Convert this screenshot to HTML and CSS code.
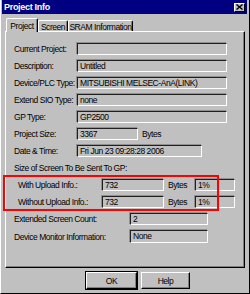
FILE: index.html
```html
<!DOCTYPE HTML>
<html>
<head>
<title>Project Info</title>
<link rel="stylesheet" href="styles.css">
</head>
<body>
  <div class="window">
    <!-- title bar -->
    <div class="titlebar">
      <span class="title">Project Info</span>
      <span class="close">
        <svg width="7" height="6" viewBox="0 0 7 6"><path d="M0.5 0.5 L6.5 5.5 M6.5 0.5 L0.5 5.5" stroke="#000" stroke-width="1.4"/></svg>
      </span>
    </div>
    <!-- tabs -->
    <div class="tabs">
      <div class="tab active">Project</div>
      <div class="tab t-screen">Screen</div>
      <div class="tab t-sram">SRAM Information</div>
    </div>
    <div class="panel">
      <div class="row"><span class="lbl">Current Project:</span><span class="field wide"></span></div>
      <div class="row"><span class="lbl">Description:</span><span class="field wide">Untitled</span></div>
      <div class="row"><span class="lbl">Device/PLC Type:</span><span class="field wide">MITSUBISHI MELSEC-AnA(LINK)</span></div>
      <div class="row"><span class="lbl">Extend SIO Type:</span><span class="field wide">none</span></div>
      <div class="row"><span class="lbl">GP Type:</span><span class="field wide">GP2500</span></div>
      <div class="row"><span class="lbl">Project Size:</span><span class="field size">3367</span><span class="unit">Bytes</span></div>
      <div class="row"><span class="lbl">Date &amp; Time:</span><span class="field date">Fri Jun 23 09:28:28 2006</span></div>
      <div class="row"><span class="lbl">Size of Screen To Be Sent To GP:</span></div>
      <div class="row sub"><span class="lbl">With Upload Info.:</span><span class="field upl">732</span><span class="unit u2">Bytes</span><span class="field pct">1%</span></div>
      <div class="row sub"><span class="lbl">Without Upload Info.:</span><span class="field upl">732</span><span class="unit u2">Bytes</span><span class="field pct">1%</span></div>
      <div class="row ext"><span class="lbl">Extended Screen Count:</span><span class="field cnt">2</span></div>
      <div class="row ext mon"><span class="lbl">Device Monitor Information:</span><span class="field cnt">None</span></div>
      <!-- red marker drawn over the two upload rows -->
      <div class="highlight"></div>
    </div>
    <div class="buttons">
      <div class="btn default"><span>OK</span></div>
      <div class="btn help"><span>Help</span></div>
    </div>
  </div>
</body>
</html>
```

FILE: styles.css
```css
/* dialog */
body {
  margin: 0;
  background: #c0c0c0;
  font-family: "Liberation Sans", Arial, sans-serif;
  font-size: 8.5px;
  letter-spacing: -0.45px;
  color: #000;
}
.window {
  width: 250px;
  height: 294px;
  box-sizing: border-box;
  padding: 0 2px 2px 1px;
  border-left: 1px solid #fff;
  border-right: 1px solid #000;
  border-bottom: 1px solid #000;
  background: #c0c0c0;
}
.titlebar {
  height: 14px;
  background: #000080;
  display: flex;
  align-items: center;
  justify-content: space-between;
  padding: 0 2px 0 2px;
}
.title { color: #fff; font-weight: bold; font-size: 9px; letter-spacing: -0.3px; }
.close {
  width: 11px; height: 9px;
  box-sizing: border-box;
  background: #c0c0c0;
  border-top: 1px solid #fff; border-left: 1px solid #fff;
  border-right: 1px solid #000; border-bottom: 1px solid #000;
  display: flex; align-items: center; justify-content: center;
}
.close svg { display: block; }

/* tabs */
.tabs {
  display: flex;
  align-items: flex-end;
  height: 13px;
  margin-top: 4px;
  padding-left: 4px;
  position: relative;
  z-index: 1;
  white-space: nowrap;
}
.tab {
  height: 11px;
  box-sizing: border-box;
  border-top: 1px solid #fff;
  border-left: 1px solid #fff;
  border-right: 1px solid #000;
  box-shadow: inset -1px 0 #808080;
  border-radius: 2px 2px 0 0;
  display: flex; align-items: center; justify-content: center;
  padding-top: 1px;
}
.tab.active { width: 32px; height: 14px; margin-bottom: -1px; background: #c0c0c0; padding-top: 0; }
.t-screen { width: 30px; }
.t-sram { width: 65px; }

.panel {
  position: relative;
  margin-left: 3px;
  width: 240px;
  height: 237px;
  box-sizing: border-box;
  border-top: 1px solid #fff; border-left: 1px solid #fff;
  border-right: 1px solid #000; border-bottom: 1px solid #000;
  box-shadow: inset -1px -1px #808080;
  padding: 11px 0 0 8px;
}
.row { display: flex; align-items: center; height: 12px; margin-bottom: 5px; white-space: nowrap; }
.lbl { width: 63px; flex: none; }
.sub { padding-left: 4px; }
.sub .lbl { width: 84px; }
.ext .lbl { width: 116px; }
.mon { margin-top: 3px; height: 13px; }

.field {
  height: 100%;
  box-sizing: border-box;
  border-top: 1px solid #202020; border-left: 1px solid #202020;
  border-right: 1px solid #fff; border-bottom: 1px solid #fff;
  box-shadow: -1px -1px #909090;
  padding-left: 2px;
  line-height: 10px;
  flex: none;
}
.wide { width: 150px; }
.size { width: 61px; }
.date { width: 125px; }
.upl { width: 62px; }
.pct { width: 40px; }
.cnt { width: 78px; }
.unit { margin-left: 4px; }
.u2 { width: 27px; }

.highlight {
  position: absolute;
  left: -3px; top: 143px;
  width: 216px; height: 36px;
  box-sizing: border-box;
  border: 2px solid #f00;
}

/* buttons */
.buttons { display: flex; gap: 3px; margin-top: 4px; padding-left: 84px; }
.btn {
  height: 17px;
  box-sizing: border-box;
  border-top: 1px solid #fff; border-left: 1px solid #fff;
  border-right: 1px solid #000; border-bottom: 1px solid #000;
  box-shadow: inset -1px -1px #808080;
  display: flex; align-items: center; justify-content: center;
}
.default { width: 51px; outline: 1px solid #000; outline-offset: 0; }
.help { width: 49px; margin-left: 1px; }
```
